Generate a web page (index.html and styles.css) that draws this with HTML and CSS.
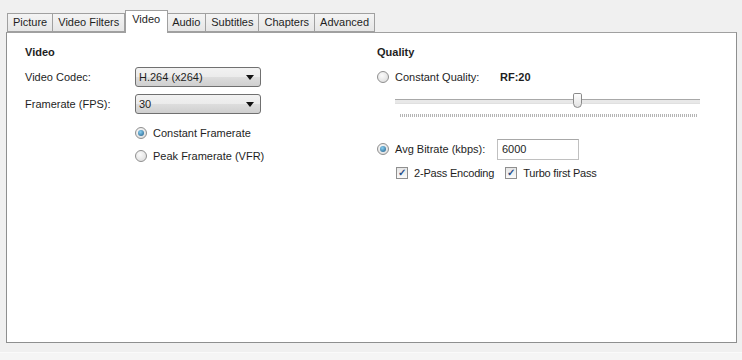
FILE: index.html
```html
<!DOCTYPE html>
<html>
<head>
<meta charset="utf-8">
<title>Video</title>
<link rel="stylesheet" href="styles.css">
</head>
<body>
<div class="tabs">
  <span class="tab">Picture</span>
  <span class="tab">Video Filters</span>
  <span class="tab active">Video</span>
  <span class="tab">Audio</span>
  <span class="tab">Subtitles</span>
  <span class="tab">Chapters</span>
  <span class="tab">Advanced</span>
</div>
<div class="panel">
  <div class="col left">
    <h3>Video</h3>
    <div class="row">
      <label class="lbl">Video Codec:</label>
      <div class="combo">H.264 (x264)<span class="arrow"></span></div>
    </div>
    <div class="row">
      <label class="lbl">Framerate (FPS):</label>
      <div class="combo">30<span class="arrow"></span></div>
    </div>
    <div class="opts">
      <div class="opt"><span class="radio on"></span>Constant Framerate</div>
      <div class="opt"><span class="radio"></span>Peak Framerate (VFR)</div>
    </div>
  </div>
  <div class="col right">
    <h3>Quality</h3>
    <div class="opt q"><span class="radio"></span><span class="qlbl">Constant Quality:</span><b>RF:20</b></div>
    <div class="slider">
      <div class="track"><span class="thumb"></span></div>
      <div class="ticks"></div>
    </div>
    <div class="opt br"><span class="radio on"></span><span class="qlbl">Avg Bitrate (kbps):</span><span class="input">6000</span></div>
    <div class="checks">
      <span class="chk"><span class="box">&#10003;</span>2-Pass Encoding</span>
      <span class="chk"><span class="box">&#10003;</span>Turbo first Pass</span>
    </div>
  </div>
</div>
<div class="status"></div>
</body>
</html>
```
FILE: styles.css
```css
* {
	margin: 0;
	padding: 0;
	box-sizing: border-box;
}
body {
	width: 742px;
	height: 360px;
	background: #f0f0f0;
	font-family: "Liberation Sans", Arial, sans-serif;
	font-size: 11px;
	color: #1e1e1e;
	overflow: hidden;
	padding-top: 10px;
}
.tabs {
	display: flex;
	align-items: flex-end;
	height: 22px;
	padding-left: 7px;
	position: relative;
	z-index: 2;
}
.tab {
	height: 19px;
	line-height: 17px;
	padding: 0 5px;
	border: 1px solid #a0a0a0;
	border-left: none;
	background: linear-gradient(#f4f4f4, #e6e6e6);
}
.tab:first-child {
	border-left: 1px solid #a0a0a0;
}
.tab.active {
	height: 23px;
	line-height: 17px;
	padding: 0 7px 0 6px;
	background: #fff;
	border: 1px solid #a0a0a0;
	border-bottom: none;
	margin-right: -1px;
	margin-bottom: -1px;
	position: relative;
}
.panel {
	margin-left: 6px;
	width: 731px;
	height: 311px;
	background: #fff;
	border: 1px solid #8e8f8f;
	border-top-color: #a0a0a0;
	display: flex;
	padding: 11px 0 0 18px;
	position: relative;
	z-index: 1;
}
h3 {
	font-size: 11px;
	font-weight: bold;
	height: 16px;
	line-height: 16px;
	margin-bottom: 7px;
}
.left {
	width: 351px;
}
.row {
	display: flex;
	align-items: center;
	height: 20px;
	margin-bottom: 7px;
}
.lbl {
	width: 110px;
}
.combo {
	width: 126px;
	height: 20px;
	line-height: 18px;
	border: 1px solid #707070;
	border-radius: 3px;
	background: linear-gradient(#f2f2f2 0%, #ebebeb 50%, #dddddd 51%, #cfcfcf 100%);
	padding-left: 3px;
	position: relative;
}
.arrow {
	position: absolute;
	right: 6px;
	top: 7px;
	border-left: 4px solid transparent;
	border-right: 4px solid transparent;
	border-top: 5px solid #111;
}
.opts {
	padding-left: 110px;
	padding-top: 4px;
}
.opt {
	display: flex;
	align-items: center;
	height: 16px;
	margin-bottom: 7px;
}
.radio {
	width: 12px;
	height: 12px;
	border-radius: 50%;
	border: 1px solid #8f8f8f;
	background: radial-gradient(circle at 40% 35%, #fbfbfb, #d8d8d8);
	margin-right: 6px;
	position: relative;
}
.radio.on::after {
	content: "";
	position: absolute;
	left: 2px;
	top: 2px;
	width: 6px;
	height: 6px;
	border-radius: 50%;
	background: radial-gradient(circle at 40% 35%, #8ad0f2, #1c5a86);
}
.right {
	padding-left: 1px;
}
.right h3 {
	margin-bottom: 9px;
}
.opt.q {
	margin-bottom: 0;
}
.qlbl {
	width: 105px;
}
.slider {
	margin: 8px 0 0 18px;
	width: 305px;
}
.track {
	height: 15px;
	position: relative;
}
.track::before {
	content: "";
	position: absolute;
	left: 0;
	right: 0;
	top: 6px;
	height: 3px;
	border-top: 1px solid #a8a8a8;
	border-bottom: 1px solid #e0e0e0;
	background: #e8e8e8;
}
.thumb {
	position: absolute;
	left: 178px;
	top: 0;
	width: 9px;
	height: 15px;
	border: 1px solid #8a8a8a;
	border-radius: 2px 2px 5px 5px;
	background: linear-gradient(#fdfdfd, #e2e2e2);
}
.ticks {
	margin: 6px 0 0 5px;
	width: 297px;
	height: 3px;
	background: repeating-linear-gradient(90deg, #b4b4b4 0 1px, transparent 1px 2px);
}
.opt.br {
	margin-top: 22px;
	height: 20px;
	margin-bottom: 6px;
}
.input {
	width: 82px;
	height: 21px;
	line-height: 19px;
	border: 1px solid #c0c0c0;
	border-top-color: #a8a8a8;
	padding-left: 4px;
	margin-left: -3px;
}
.checks {
	display: flex;
	padding-left: 19px;
	height: 16px;
	align-items: center;
	letter-spacing: -0.2px;
}
.chk {
	display: flex;
	align-items: center;
	margin-right: 11px;
}
.box {
	width: 12px;
	height: 12px;
	border: 1px solid #8f8f8f;
	background: linear-gradient(#e6e6e6, #fafafa);
	color: #2a4f8a;
	font-size: 10px;
	line-height: 10px;
	text-align: center;
	font-weight: bold;
	margin-right: 6px;
}
.status {
	margin-top: 9px;
	height: 8px;
	background: #f5f5f5;
	border-top: 1px solid #fafafa;
}
```
